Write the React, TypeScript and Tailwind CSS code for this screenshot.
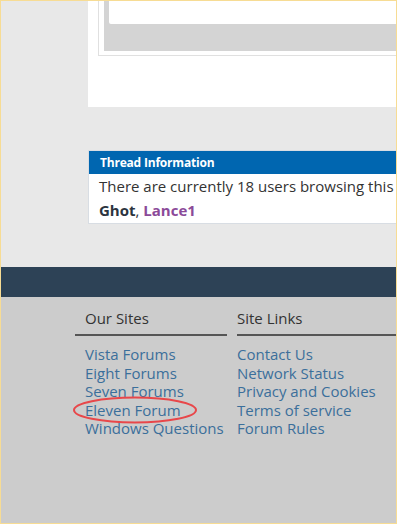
export default function App() {
  const ourSites = ['Vista Forums', 'Eight Forums', 'Seven Forums', 'Eleven Forum', 'Windows Questions'];
  const siteLinks = ['Contact Us', 'Network Status', 'Privacy and Cookies', 'Terms of service', 'Forum Rules'];

  return (
    <div
      className="w-[397px] h-[524px] overflow-hidden border border-[#f7dc94] flex flex-col bg-[#cccccc]"
      style={{ fontFamily: '"Open Sans", "Noto Sans", sans-serif' }}
    >
      {/* page body */}
      <div className="h-[266px] shrink-0 bg-[#e8e8e8] pl-[87px]">
        <div className="w-[400px] h-[106px] bg-white pl-[10px]">
          <div className="h-[55px] border border-t-0 border-[#e0e0e0] pl-[5px] pb-[4px]">
            <div className="h-[50px] bg-[#d4d4d4] pl-[5px] pb-[26px]">
              <div className="h-[23px] bg-white rounded-bl-[2px]" />
            </div>
          </div>
        </div>

        <div className="mt-[43px] w-[420px] border border-[#d8dde3] bg-white">
          <div className="h-[23px] bg-[#0066b0] pl-[11px] text-[12px] font-bold leading-[23px] tracking-[-0.2px] text-white">
            Thread Information
          </div>
          <div className="px-[10px] pb-[1px] text-[15px] leading-[24px] text-[#333333] whitespace-nowrap">
            <div>There are currently 18 users browsing this</div>
            <div className="font-bold">
              <span className="text-[#2c3440]">Ghot</span>
              <span className="font-normal text-[#333333]">, </span>
              <span className="text-[#8b4a99]">Lance1</span>
            </div>
          </div>
        </div>
      </div>

      {/* footer band */}
      <div className="h-[30px] shrink-0 bg-[#2d4256]" />

      {/* footer links */}
      <div className="flex gap-[10px] pl-[74px] whitespace-nowrap">
        <div className="w-[152px] shrink-0">
          <div className="h-[39px] pt-[10px] pl-[10px] border-b-2 border-[#555555] text-[15px] leading-[22px] text-[#333333]">
            Our Sites
          </div>
          <ul className="mt-[9px] pl-[10px] text-[15px] leading-[18.5px] text-[#3b6f9b]">
            {ourSites.map((s) => (
              <li key={s}>
                {s === 'Eleven Forum' ? (
                  <span className="relative inline-block">
                    {s}
                    <svg
                      className="absolute left-[-12px] top-[-5px] overflow-visible"
                      width="124"
                      height="28"
                      viewBox="0 0 124 28"
                    >
                      <ellipse cx="62" cy="14" rx="61" ry="12.5" fill="none" stroke="#e8474a" strokeWidth="2" />
                    </svg>
                  </span>
                ) : (
                  s
                )}
              </li>
            ))}
          </ul>
        </div>
        <div className="w-[300px] shrink-0">
          <div className="h-[39px] pt-[10px] border-b-2 border-[#555555] text-[15px] leading-[22px] text-[#333333]">
            Site Links
          </div>
          <ul className="mt-[9px] text-[15px] leading-[18.5px] text-[#3b6f9b]">
            {siteLinks.map((s) => (
              <li key={s}>{s}</li>
            ))}
          </ul>
        </div>
      </div>
    </div>
  );
}
